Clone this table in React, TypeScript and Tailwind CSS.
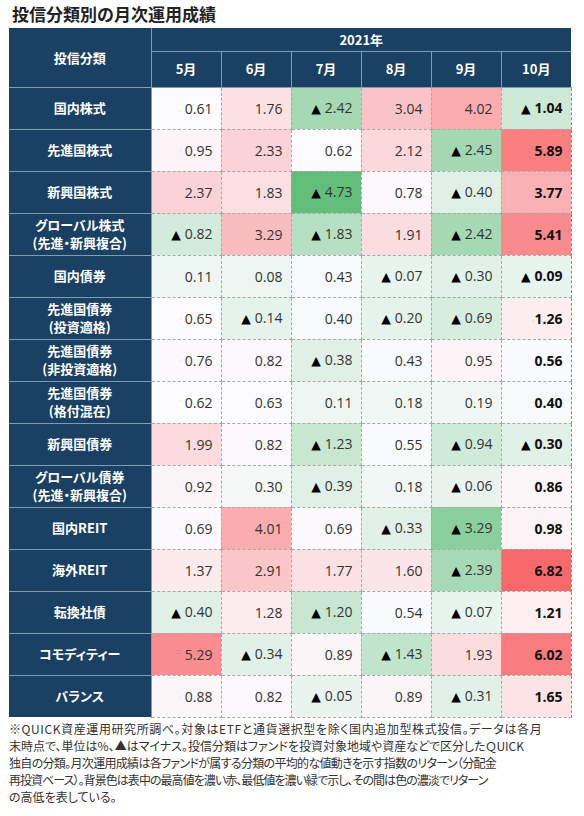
import React from 'react';

type Row = { label: string[]; values: number[] };

const months = ['5月', '6月', '7月', '8月', '9月', '10月'];

const rows: Row[] = [
  { label: ['国内株式'], values: [0.61, 1.76, -2.42, 3.04, 4.02, -1.04] },
  { label: ['先進国株式'], values: [0.95, 2.33, 0.62, 2.12, -2.45, 5.89] },
  { label: ['新興国株式'], values: [2.37, 1.83, -4.73, 0.78, -0.4, 3.77] },
  { label: ['グローバル株式', '(先進・新興複合)'], values: [-0.82, 3.29, -1.83, 1.91, -2.42, 5.41] },
  { label: ['国内債券'], values: [0.11, 0.08, 0.43, -0.07, -0.3, -0.09] },
  { label: ['先進国債券', '(投資適格)'], values: [0.65, -0.14, 0.4, -0.2, -0.69, 1.26] },
  { label: ['先進国債券', '(非投資適格)'], values: [0.76, 0.82, -0.38, 0.43, 0.95, 0.56] },
  { label: ['先進国債券', '(格付混在)'], values: [0.62, 0.63, 0.11, 0.18, 0.19, 0.4] },
  { label: ['新興国債券'], values: [1.99, 0.82, -1.23, 0.55, -0.94, -0.3] },
  { label: ['グローバル債券', '(先進・新興複合)'], values: [0.92, 0.3, -0.39, 0.18, -0.06, 0.86] },
  { label: ['国内REIT'], values: [0.69, 4.01, 0.69, -0.33, -3.29, 0.98] },
  { label: ['海外REIT'], values: [1.37, 2.91, 1.77, 1.6, -2.39, 6.82] },
  { label: ['転換社債'], values: [-0.4, 1.28, -1.2, 0.54, -0.07, 1.21] },
  { label: ['コモディティー'], values: [5.29, -0.34, 0.89, -1.43, 1.93, 6.02] },
  { label: ['バランス'], values: [0.88, 0.82, -0.05, 0.89, -0.31, 1.65] },
];

// 3色スケール（最小=緑、中央値=白、最大=赤）
const sorted = rows.flatMap((r) => r.values).sort((a, b) => a - b);
const lo = sorted[0];
const hi = sorted[sorted.length - 1];
const n = sorted.length;
const mid = n % 2 ? sorted[(n - 1) / 2] : (sorted[n / 2 - 1] + sorted[n / 2]) / 2;

const GREEN = [99, 190, 123];
const WHITE = [252, 252, 255];
const RED = [248, 105, 107];

function mix(a: number[], b: number[], t: number) {
  const c = a.map((x, i) => Math.round(x + (b[i] - x) * t));
  return `rgb(${c[0]}, ${c[1]}, ${c[2]})`;
}

function cellColor(v: number) {
  if (v <= mid) return mix(GREEN, WHITE, (v - lo) / (mid - lo));
  return mix(WHITE, RED, (v - mid) / (hi - mid));
}

function Value({ v }: { v: number }) {
  if (v >= 0) return <>{v.toFixed(2)}</>;
  return (
    <>
      <span className="text-[12.5px] text-black mr-[4px] font-['DejaVu_Sans',sans-serif]">▲</span>
      {Math.abs(v).toFixed(2)}
    </>
  );
}

const jp = "font-['Noto_Sans_CJK_JP',sans-serif]";

const notes = [
  { text: '※QUICK資産運用研究所調べ。対象はETFと通貨選択型を除く国内追加型株式投信。データは各月', cls: 'tracking-[0.6px]' },
  { text: '末時点で、単位は%、▲はマイナス。投信分類はファンドを投資対象地域や資産などで区分したＱUICK', cls: 'tracking-[0px]' },
  { text: '独自の分類。月次運用成績は各ファンドが属する分類の平均的な値動きを示す指数のリターン（分配金', cls: 'tracking-[-0.68px]' },
  { text: '再投資ベース）。背景色は表中の最高値を濃い赤、最低値を濃い緑で示し、その間は色の濃淡でリターン', cls: 'tracking-[-0.95px]' },
  { text: 'の高低を表している。', cls: '' },
];

export default function App() {
  return (
    <div className="w-[584px] h-[816px] bg-white text-[#222]">
      <div className={`h-[28px] pl-[12px] flex items-center text-[17px] font-bold ${jp}`}>
        投信分類別の月次運用成績
      </div>

      <table className="ml-[9px] w-[562px] table-fixed border-collapse">
        <colgroup>
          <col className="w-[142px]" />
          {months.map((m) => (
            <col key={m} className="w-[70px]" />
          ))}
        </colgroup>
        <thead className={`bg-[#1a4163] text-white font-bold text-[13px] ${jp}`}>
          <tr className="h-[23px]">
            <th rowSpan={2} className="border-r border-b border-[#7f9cb6] font-bold">
              投信分類
            </th>
            <th colSpan={6} className="border-b border-[#7f9cb6] font-bold leading-none">
              2021年
            </th>
          </tr>
          <tr className="h-[36px]">
            {months.map((m, i) => (
              <th
                key={m}
                className={`border-b border-[#7f9cb6] font-bold ${i < 5 ? 'border-r' : ''}`}
              >
                {m}
              </th>
            ))}
          </tr>
        </thead>
        <tbody>
          {rows.map((r, ri) => (
            <tr key={ri} className="h-[42px]">
              <td
                className={`bg-[#1a4163] text-white font-bold text-[13px] leading-[18px] text-center border-r border-[#7f9cb6] ${
                  ri < rows.length - 1 ? 'border-b' : ''
                } ${jp} [font-feature-settings:'palt']`}
              >
                {r.label.map((l) => (
                  <div key={l}>{l}</div>
                ))}
              </td>
              {r.values.map((v, ci) => (
                <td
                  key={ci}
                  style={{ backgroundColor: cellColor(v) }}
                  className={`text-right pr-[8px] border border-dashed border-[#a9a9a9] whitespace-nowrap font-['Open_Sans',sans-serif] text-[14px] ${
                    ci === 5 ? 'font-bold text-[#111] border-r-solid border-r-[#8c8c8c]' : 'text-[#333]'
                  }`}
                >
                  <Value v={v} />
                </td>
              ))}
            </tr>
          ))}
        </tbody>
      </table>

      <div
        className={`mt-[2px] ml-[9px] text-[12px] leading-[17px] text-[#333] ${jp} [font-feature-settings:'palt']`}
      >
        {notes.map((l) => (
          <div key={l.text} className={`whitespace-nowrap ${l.cls}`}>
            {l.text}
          </div>
        ))}
      </div>
    </div>
  );
}
